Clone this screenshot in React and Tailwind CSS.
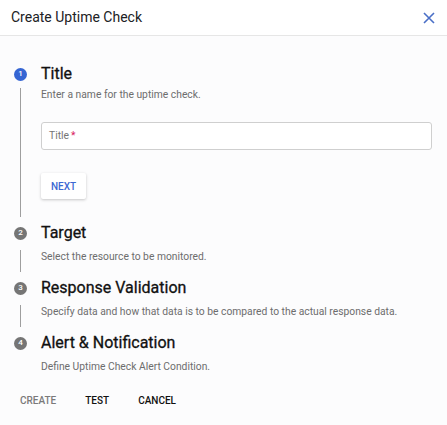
const STEPS = [
    { n: 1, title: "Title", desc: "Enter a name for the uptime check.", active: true },
    { n: 2, title: "Target", desc: "Select the resource to be monitored." },
    { n: 3, title: "Response Validation", desc: "Specify data and how that data is to be compared to the actual response data." },
    { n: 4, title: "Alert & Notification", desc: "Define Uptime Check Alert Condition.", last: true },
]

function StepBadge({ n, active }) {
    return (
        <div
            className={`w-[13px] h-[13px] rounded-full flex items-center justify-center text-white text-[8px] font-medium leading-none ${
                active ? "bg-[#3565d3]" : "bg-[#757575]"
            }`}
        >
            {n}
        </div>
    )
}

function Step({ step }) {
    return (
        <div>
            <div className="flex items-center h-[20px]">
                <div className="w-[15px] flex justify-center">
                    <StepBadge n={step.n} active={step.active} />
                </div>
                <div className="ml-[13px] text-[16px] font-normal text-[#111] leading-none [-webkit-text-stroke:0.3px_#111]">
                    {step.title}
                </div>
            </div>

            {step.active ? (
                <div className="mt-[4px] ml-[7px] border-l border-[#9e9e9e] pl-[20px] pt-[1px] pb-[18px] mb-[6px]">
                    <div className="text-[10.3px] text-[#6d6d6d] leading-[12px]">
                        {step.desc}
                    </div>
                    <div className="mt-[21px] mr-[15px] h-[28px] rounded-[3px] border border-[#cfcfcf] bg-white flex items-center px-[7px] text-[10.3px] text-[#757575]">
                        Title<span className="text-[#d81b60] ml-[2px]">*</span>
                    </div>
                    <button className="mt-[23px] w-[45px] h-[26px] rounded-[2px] bg-white shadow-[0_1px_3px_rgba(0,0,0,0.22)] text-[10px] font-medium text-[#3c68d2]">
                        NEXT
                    </button>
                </div>
            ) : step.last ? (
                <div className="mt-[8px] pl-[28px] text-[10.3px] text-[#6d6d6d] leading-[12px]">
                    {step.desc}
                </div>
            ) : (
                <div className="mt-[7px] mb-[6px] ml-[7px] border-l border-[#9e9e9e] pl-[20px] h-[22px]">
                    <div className="text-[10.3px] text-[#6d6d6d] leading-[14px]">
                        {step.desc}
                    </div>
                </div>
            )}
        </div>
    )
}

export default function App() {
    return (
        <div
            className="w-[447px] h-[425px] bg-white flex flex-col"
            style={{ fontFamily: "Roboto, 'Liberation Sans', sans-serif" }}
        >
            <div className="h-[36px] flex items-center justify-between pl-[11px] pr-[12px] border-b border-[#e6e6e6]">
                <div className="text-[14px] text-[#202124]">Create Uptime Check</div>
                <svg width="12" height="12" viewBox="0 0 12 12" className="text-[#4a6fc7]">
                    <path d="M1 1L11 11M11 1L1 11" stroke="currentColor" strokeWidth="1.6" />
                </svg>
            </div>

            <div className="flex-1 bg-[#fcfcfd] pt-[28px] pl-[13px]">
                {STEPS.map((s) => (
                    <Step key={s.n} step={s} />
                ))}

                <div className="flex items-center gap-[29px] mt-[20px] pl-[7px] text-[10px] font-medium">
                    <span className="text-[#7a7a7a]">CREATE</span>
                    <span className="text-[#111]">TEST</span>
                    <span className="text-[#111]">CANCEL</span>
                </div>
            </div>
        </div>
    )
}
